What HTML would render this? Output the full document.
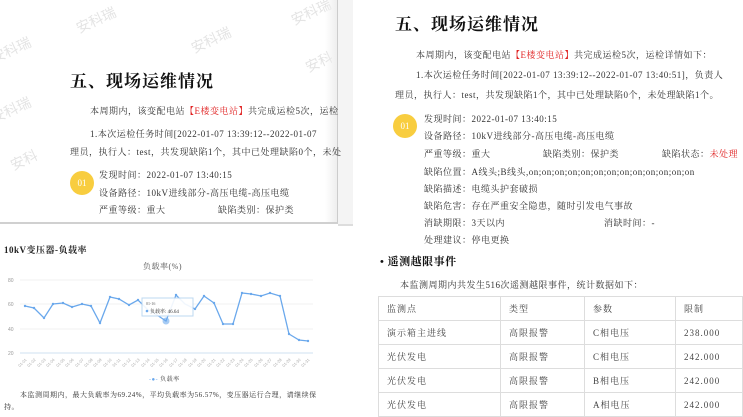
<!DOCTYPE html><html><head><meta charset="utf-8"><style>
body{margin:0;width:743px;height:411px;overflow:hidden;background:#fff;font-family:"Liberation Serif","Noto Serif CJK SC",serif;color:#333;position:relative}
.a{position:absolute;white-space:nowrap;font-size:9px;line-height:1;letter-spacing:.5px}
.h{font-size:17px;font-weight:bold;color:#111;letter-spacing:1px}
.c{position:absolute;width:24px;height:24px;border-radius:50%;background:#f8cd3f;color:#fff;font-size:9px;text-align:center;line-height:24px}
.r{color:#e02020}
.wm{position:absolute;color:#e4e4e4;font-size:14px;transform:rotate(-25deg);font-family:"Noto Sans CJK SC",sans-serif}
table{position:absolute;left:378px;top:296px;border-collapse:collapse;font-size:9px;letter-spacing:1px}
td{border:1px solid #ddd;height:23px;padding:0 0 0 8px;color:#444}
</style></head><body>
<div class="wm" style="left:75px;top:10px">安科瑞</div>
<div class="wm" style="left:190px;top:30px">安科瑞</div>
<div class="wm" style="left:290px;top:2px">安科瑞</div>
<div class="wm" style="left:-10px;top:40px">安科瑞</div>
<div class="wm" style="left:-10px;top:100px">安科瑞</div>
<div class="wm" style="left:10px;top:150px">安科</div>
<div class="wm" style="left:305px;top:52px">安科</div>
<div style="position:absolute;left:0;top:0;width:337px;height:222px;border-right:1px solid #ccc;border-bottom:2px solid #d0d0d0;background:linear-gradient(to right,rgba(255,255,255,0) 325px,#eee 337px)"></div>
<div style="position:absolute;left:338px;top:0;width:15px;height:224px;background:#f4f4f4;border-bottom:2px solid #ddd"></div>
<div class="a h" style="left:70px;top:73px">五、现场运维情况</div>
<div class="a" style="left:90px;top:107px">本周期内，该变配电站<span class="r">【E楼变电站】</span>共完成运检5次，运检</div>
<div class="a" style="left:90px;top:130px">1.本次运检任务时间[2022-01-07 13:39:12--2022-01-07</div>
<div class="a" style="left:70px;top:148px">理员，执行人：test，共发现缺陷1个，其中已处理缺陷0个，未处</div>
<div class="c" style="left:70px;top:171px">01</div>
<div class="a" style="left:99px;top:171px">发现时间：2022-01-07 13:40:15</div>
<div class="a" style="left:99px;top:189px">设备路径：10kV进线部分-高压电缆-高压电缆</div>
<div class="a" style="left:99px;top:206px">严重等级：重大</div>
<div class="a" style="left:218px;top:206px">缺陷类别：保护类</div>

<div class="a h" style="left:395px;top:16px">五、现场运维情况</div>
<div class="a" style="left:416px;top:51px">本周期内，该变配电站<span class="r">【E楼变电站】</span>共完成运检5次，运检详情如下：</div>
<div class="a" style="left:416px;top:71px">1.本次运检任务时间[2022-01-07 13:39:12--2022-01-07 13:40:51]，负责人</div>
<div class="a" style="left:395px;top:91px">理员，执行人：test，共发现缺陷1个，其中已处理缺陷0个，未处理缺陷1个。</div>
<div class="c" style="left:393px;top:114px">01</div>
<div class="a" style="left:424px;top:115px">发现时间：2022-01-07 13:40:15</div>
<div class="a" style="left:424px;top:132px">设备路径：10kV进线部分-高压电缆-高压电缆</div>
<div class="a" style="left:424px;top:150px">严重等级：重大</div>
<div class="a" style="left:543px;top:150px">缺陷类别：保护类</div>
<div class="a" style="left:662px;top:150px">缺陷状态：<span class="r">未处理</span></div>
<div class="a" style="left:424px;top:168px">缺陷位置：A线头;B线头,on;on;on;on;on;on;on;on;on;on;on;on;on</div>
<div class="a" style="left:424px;top:185px">缺陷描述：电缆头护套破损</div>
<div class="a" style="left:424px;top:202px">缺陷危害：存在严重安全隐患，随时引发电气事故</div>
<div class="a" style="left:424px;top:219px">消缺期限：3天以内</div>
<div class="a" style="left:604px;top:219px">消缺时间：-</div>
<div class="a" style="left:424px;top:236px">处理建议：停电更换</div>
<div class="a" style="left:380px;top:257px;font-size:11px;font-weight:bold;color:#111">• 遥测越限事件</div>
<div class="a" style="left:400px;top:281px">本监测周期内共发生516次遥测越限事件，统计数据如下：</div>
<table><tr><td style="width:113px">监测点</td><td style="width:75px">类型</td><td style="width:82px">参数</td><td style="width:58px">限制</td></tr>
<tr><td>演示箱主进线</td><td>高限报警</td><td>C相电压</td><td>238.000</td></tr>
<tr><td>光伏发电</td><td>高限报警</td><td>C相电压</td><td>242.000</td></tr>
<tr><td>光伏发电</td><td>高限报警</td><td>B相电压</td><td>242.000</td></tr>
<tr><td>光伏发电</td><td>高限报警</td><td>A相电压</td><td>242.000</td></tr></table>

<div class="a" style="left:4px;top:246px;font-size:9px;font-weight:bold;color:#222">10kV变压器-负载率</div>
<div class="a" style="left:143px;top:263px;font-size:8px;color:#555">负载率(%)</div>
<svg style="position:absolute;left:0;top:270px" width="340" height="110">
<g font-size="5" fill="#999" font-family="Liberation Sans"><text x="8" y="12">80</text><text x="8" y="36">60</text><text x="8" y="61">40</text><text x="8" y="85">20</text></g>
<g stroke="#f0f0f0"><line x1="20" y1="10" x2="313" y2="10"/><line x1="20" y1="34" x2="313" y2="34"/><line x1="20" y1="59" x2="313" y2="59"/></g>
<line x1="20" y1="83" x2="313" y2="83" stroke="#cfe0f0"/>
<polyline fill="none" stroke="#6aa8ec" stroke-width="1.3" points="25,36 34,38 44,48 53,34 63,33 72,37 82,34 91,36 100,53 110,27 119,29 129,35 138,30 148,40 157,45 166,51 176,25 185,34 195,39 204,26 214,33 223,54 233,54 242,23 251,24 261,26 270,23 280,26 289,64 299,70 308,71"/>
<g fill="#6aa8ec"><circle cx="25" cy="36" r="1.2"/><circle cx="34" cy="38" r="1.2"/><circle cx="44" cy="48" r="1.2"/><circle cx="53" cy="34" r="1.2"/><circle cx="63" cy="33" r="1.2"/><circle cx="72" cy="37" r="1.2"/><circle cx="82" cy="34" r="1.2"/><circle cx="91" cy="36" r="1.2"/><circle cx="100" cy="53" r="1.2"/><circle cx="110" cy="27" r="1.2"/><circle cx="119" cy="29" r="1.2"/><circle cx="129" cy="35" r="1.2"/><circle cx="138" cy="30" r="1.2"/><circle cx="176" cy="25" r="1.2"/><circle cx="195" cy="39" r="1.2"/><circle cx="204" cy="26" r="1.2"/><circle cx="214" cy="33" r="1.2"/><circle cx="223" cy="54" r="1.2"/><circle cx="233" cy="54" r="1.2"/><circle cx="242" cy="23" r="1.2"/><circle cx="251" cy="24" r="1.2"/><circle cx="261" cy="26" r="1.2"/><circle cx="270" cy="23" r="1.2"/><circle cx="280" cy="26" r="1.2"/><circle cx="289" cy="64" r="1.2"/><circle cx="299" cy="70" r="1.2"/><circle cx="308" cy="71" r="1.2"/></g>
<circle cx="166" cy="51" r="3.5" fill="#6aa8ec" opacity=".6"/>
<rect x="142" y="28" width="51" height="18" fill="#fff" stroke="#b8d4f0" opacity=".9"/>
<text x="146" y="35" font-size="4" fill="#666">01-16</text>
<circle cx="147" cy="41" r="1.3" fill="#6aa8ec"/>
<text x="150" y="43" font-size="5" fill="#333">负载率: 46.64</text>
<g font-size="4" fill="#aaa" font-family="Liberation Sans" text-anchor="end">
<text x="27" y="90" transform="rotate(-45 27 90)">01-01</text><text x="36" y="90" transform="rotate(-45 36 90)">01-02</text><text x="46" y="90" transform="rotate(-45 46 90)">01-03</text><text x="55" y="90" transform="rotate(-45 55 90)">01-04</text><text x="65" y="90" transform="rotate(-45 65 90)">01-05</text><text x="74" y="90" transform="rotate(-45 74 90)">01-06</text><text x="84" y="90" transform="rotate(-45 84 90)">01-07</text><text x="93" y="90" transform="rotate(-45 93 90)">01-08</text><text x="102" y="90" transform="rotate(-45 102 90)">01-09</text><text x="112" y="90" transform="rotate(-45 112 90)">01-10</text><text x="121" y="90" transform="rotate(-45 121 90)">01-11</text><text x="131" y="90" transform="rotate(-45 131 90)">01-12</text><text x="140" y="90" transform="rotate(-45 140 90)">01-13</text><text x="150" y="90" transform="rotate(-45 150 90)">01-14</text><text x="159" y="90" transform="rotate(-45 159 90)">01-15</text><text x="168" y="90" transform="rotate(-45 168 90)">01-16</text><text x="178" y="90" transform="rotate(-45 178 90)">01-17</text><text x="187" y="90" transform="rotate(-45 187 90)">01-18</text><text x="197" y="90" transform="rotate(-45 197 90)">01-19</text><text x="206" y="90" transform="rotate(-45 206 90)">01-20</text><text x="216" y="90" transform="rotate(-45 216 90)">01-21</text><text x="225" y="90" transform="rotate(-45 225 90)">01-22</text><text x="235" y="90" transform="rotate(-45 235 90)">01-23</text><text x="244" y="90" transform="rotate(-45 244 90)">01-24</text><text x="253" y="90" transform="rotate(-45 253 90)">01-25</text><text x="263" y="90" transform="rotate(-45 263 90)">01-26</text><text x="272" y="90" transform="rotate(-45 272 90)">01-27</text><text x="282" y="90" transform="rotate(-45 282 90)">01-28</text><text x="291" y="90" transform="rotate(-45 291 90)">01-29</text><text x="301" y="90" transform="rotate(-45 301 90)">01-30</text><text x="310" y="90" transform="rotate(-45 310 90)">01-31</text></g>
</svg>
<div class="a" style="left:149px;top:377px;font-size:6px"><span style="color:#6aa8ec">-●-</span> 负载率</div>
<div class="a" style="left:20px;top:392px;font-size:7px">本监测周期内，最大负载率为69.24%，平均负载率为56.57%，变压器运行合理，请继续保</div>
<div class="a" style="left:4px;top:404px;font-size:7px">持。</div>
</body></html>
